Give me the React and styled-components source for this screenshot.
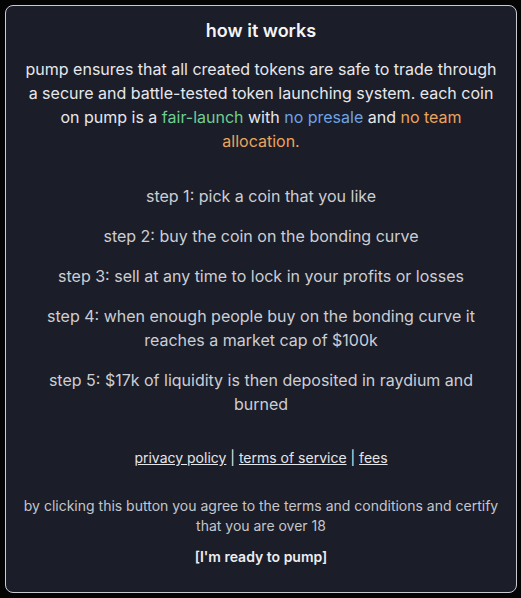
import React from "react";
import styled, { createGlobalStyle } from "styled-components";

const GlobalStyle = createGlobalStyle`
  html, body {
    margin: 0;
    padding: 0;
    background: #040404;
  }
  body {
    font-family: Inter, "Noto Sans", sans-serif;
  }
`;

const steps = [
  "step 1: pick a coin that you like",
  "step 2: buy the coin on the bonding curve",
  "step 3: sell at any time to lock in your profits or losses",
  "step 4: when enough people buy on the bonding curve it reaches a market cap of $100k",
  "step 5: $17k of liquidity is then deposited in raydium and burned",
];

function App() {
  return (
    <Page>
      <GlobalStyle />
      <Modal>
        <Title>how it works</Title>
        <Intro>
          pump ensures that all created tokens are safe to trade through a
          secure and battle-tested token launching system. each coin on pump is
          a <Accent $color="#6fcf93">fair-launch</Accent> with{" "}
          <Accent $color="#6ea3e4">no presale</Accent> and{" "}
          <Accent $color="#eba45c">no team allocation.</Accent>
        </Intro>
        <Steps>
          {steps.map((s) => (
            <Step key={s}>{s}</Step>
          ))}
        </Steps>
        <Links>
          <a href="#">privacy policy</a> | <a href="#">terms of service</a> |{" "}
          <a href="#">fees</a>
        </Links>
        <Disclaimer>
          by clicking this button you agree to the terms and conditions and
          certify that you are over 18
        </Disclaimer>
        <ReadyButton>[I'm ready to pump]</ReadyButton>
      </Modal>
    </Page>
  );
}

const Page = styled.div`
  min-height: 598px;
  padding: 5px;
  box-sizing: border-box;
`;

const Modal = styled.div`
  width: 512px;
  height: 588px;
  box-sizing: border-box;
  background: #1b1d28;
  border: 1px solid #c9cbd3;
  border-radius: 8px;
  padding: 11px 16px 16px;
  display: flex;
  flex-direction: column;
  align-items: center;
  text-align: center;
`;

const Title = styled.h1`
  margin: 0;
  font-size: 18px;
  line-height: 28px;
  font-weight: 600;
  color: #f3f4f6;
`;

const Intro = styled.p`
  margin: 12px 0 0;
  font-size: 16px;
  line-height: 24px;
  color: #e7e8ec;
`;

const Accent = styled.span`
  color: ${(p) => p.$color};
`;

const Steps = styled.div`
  margin-top: 31px;
  display: flex;
  flex-direction: column;
  gap: 16px;
`;

const Step = styled.p`
  margin: 0;
  font-size: 16px;
  line-height: 24px;
  color: #ccced4;
`;

const Links = styled.div`
  margin-top: 32px;
  font-size: 14px;
  line-height: 20px;
  color: #e5e6ea;

  a {
    color: inherit;
    text-decoration: underline;
  }
`;

const Disclaimer = styled.p`
  margin: 28px 0 0;
  font-size: 14px;
  line-height: 20px;
  color: #c4c6cc;
`;

const ReadyButton = styled.button`
  margin-top: 11px;
  padding: 0;
  background: none;
  border: none;
  font-family: inherit;
  font-size: 14px;
  line-height: 20px;
  font-weight: 600;
  color: #eceef2;
  cursor: pointer;
`;

export default App;
